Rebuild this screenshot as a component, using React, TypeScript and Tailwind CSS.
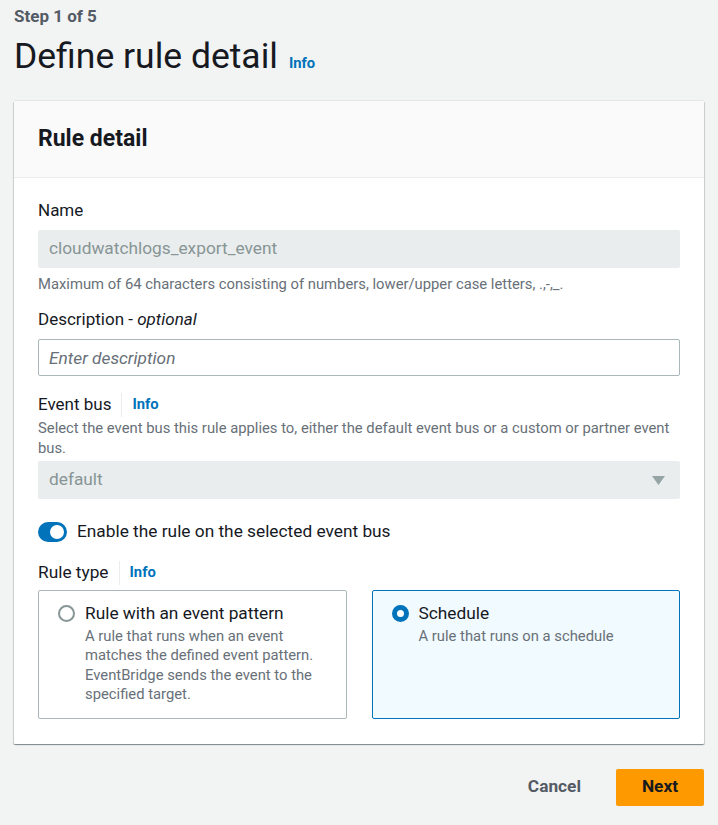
import { useState } from 'react';

const font = { fontFamily: 'Roboto, "Noto Sans", Arial, sans-serif' };

function InfoLink({ divider = false }: { divider?: boolean }) {
  return (
    <span className="flex items-center">
      {divider && <span className="mx-[10px] h-[24px] w-px bg-[#eaeded]" />}
      <a className="text-[14.8px] font-bold leading-none text-[#0073bb]">Info</a>
    </span>
  );
}

function Tile({
  title,
  text,
  checked,
  onClick,
}: {
  title: string;
  text: string;
  checked: boolean;
  onClick: () => void;
}) {
  return (
    <button
      onClick={onClick}
      className={`flex items-start gap-[10px] rounded-[2px] border pl-[19px] pr-[20px] pt-[9px] pb-[13px] text-left ${
        checked ? 'border-[#0073bb] bg-[#f1faff]' : 'border-[#aab7b8] bg-white'
      }`}
    >
      <span className="mt-[5px] flex h-[17px] w-[17px] shrink-0 items-center justify-center">
        {checked ? (
          <span className="h-[17px] w-[17px] rounded-full border-[5px] border-[#0073bb] bg-white" />
        ) : (
          <span className="h-[17px] w-[17px] rounded-full border-2 border-[#879596] bg-white" />
        )}
      </span>
      <span className="flex flex-col">
        <span className="text-[17.3px] leading-[27px] text-[#16191f]">{title}</span>
        <span className="text-[14.8px] leading-[19.4px] text-[#687078]">{text}</span>
      </span>
    </button>
  );
}

export default function App() {
  const [enabled, setEnabled] = useState(true);
  const [ruleType, setRuleType] = useState<'pattern' | 'schedule'>('schedule');

  return (
    <div className="min-h-[825px] bg-[#f2f3f3] px-[14px] pt-[5px] text-[#16191f]" style={font}>
      <div className="text-[17px] font-bold leading-[22px] text-[#545b64]">Step 1 of 5</div>
      <div className="mt-[7px] flex items-baseline gap-[11px]">
        <h1 className="text-[35.5px] leading-[44px] text-[#16191f]">Define rule detail</h1>
        <InfoLink />
      </div>

      <div className="mt-[23px] rounded-[1px] bg-white shadow-[0_1px_1px_0_rgba(0,28,36,0.3),1px_1px_1px_0_rgba(0,28,36,0.15),-1px_1px_1px_0_rgba(0,28,36,0.15),0_-1px_0_0_rgba(0,28,36,0.06)]">
        <div className="border-b border-[#eaeded] bg-[#fafafa] px-[24px] py-[23px]">
          <h2 className="text-[23px] font-bold leading-[30px]">Rule detail</h2>
        </div>

        <div className="flex flex-col px-[24px] pt-[19px] pb-[25px]">
          <label className="text-[17px] leading-[27px]">Name</label>
          <div className="mt-[6px] flex h-[38px] items-center rounded-[2px] bg-[#eaeded] px-[11px] text-[17.3px] text-[#879596]">
            cloudwatchlogs_export_event
          </div>
          <p className="mt-[6px] text-[14.8px] leading-[20px] text-[#687078]">
            Maximum of 64 characters consisting of numbers, lower/upper case letters, .,-,_.
          </p>

          <label className="mt-[12px] text-[17px] leading-[27px]">
            Description - <i>optional</i>
          </label>
          <input
            placeholder="Enter description"
            className="mt-[6px] h-[37px] rounded-[2px] border border-[#aab7b8] px-[10px] text-[17.3px] outline-none placeholder:italic placeholder:text-[#687078]"
          />

          <div className="mt-[15px] flex items-center">
            <label className="text-[17px] leading-[27px]">Event bus</label>
            <InfoLink divider />
          </div>
          <p className="text-[14.8px] leading-[20px] text-[#687078]">
            Select the event bus this rule applies to, either the default event bus or a custom or partner event
            bus.
          </p>
          <div className="mt-[3px] flex h-[38px] items-center justify-between rounded-[2px] bg-[#eaeded] pl-[11px] pr-[15px] text-[17.3px] text-[#879596]">
            <span>default</span>
            <svg width="13" height="11" viewBox="0 0 13 11">
              <path d="M0 1h13L6.5 10z" fill="#95a5a6" />
            </svg>
          </div>

          <button onClick={() => setEnabled(!enabled)} className="mt-[19px] flex items-center gap-[10px] text-left">
            <span
              className={`flex h-[20px] w-[29px] items-center rounded-full px-[3px] ${
                enabled ? 'justify-end bg-[#0073bb]' : 'justify-start bg-[#879596]'
              }`}
            >
              <span className="h-[14px] w-[14px] rounded-full bg-white" />
            </span>
            <span className="text-[17.3px] leading-[27px]">Enable the rule on the selected event bus</span>
          </button>

          <div className="mt-[14px] flex items-center">
            <label className="text-[17.3px] leading-[27px]">Rule type</label>
            <InfoLink divider />
          </div>
          <div className="mt-[4px] grid grid-cols-2 gap-[25px]">
            <Tile
              title="Rule with an event pattern"
              text="A rule that runs when an event matches the defined event pattern. EventBridge sends the event to the specified target."
              checked={ruleType === 'pattern'}
              onClick={() => setRuleType('pattern')}
            />
            <Tile
              title="Schedule"
              text="A rule that runs on a schedule"
              checked={ruleType === 'schedule'}
              onClick={() => setRuleType('schedule')}
            />
          </div>
        </div>
      </div>

      <div className="mt-[25px] flex items-center justify-end gap-[35px]">
        <button className="text-[17.3px] font-bold text-[#545b64]">Cancel</button>
        <button className="h-[37px] w-[88px] rounded-[2px] bg-[#ff9900] text-[17.3px] font-bold text-[#16191f]">
          Next
        </button>
      </div>
    </div>
  );
}
